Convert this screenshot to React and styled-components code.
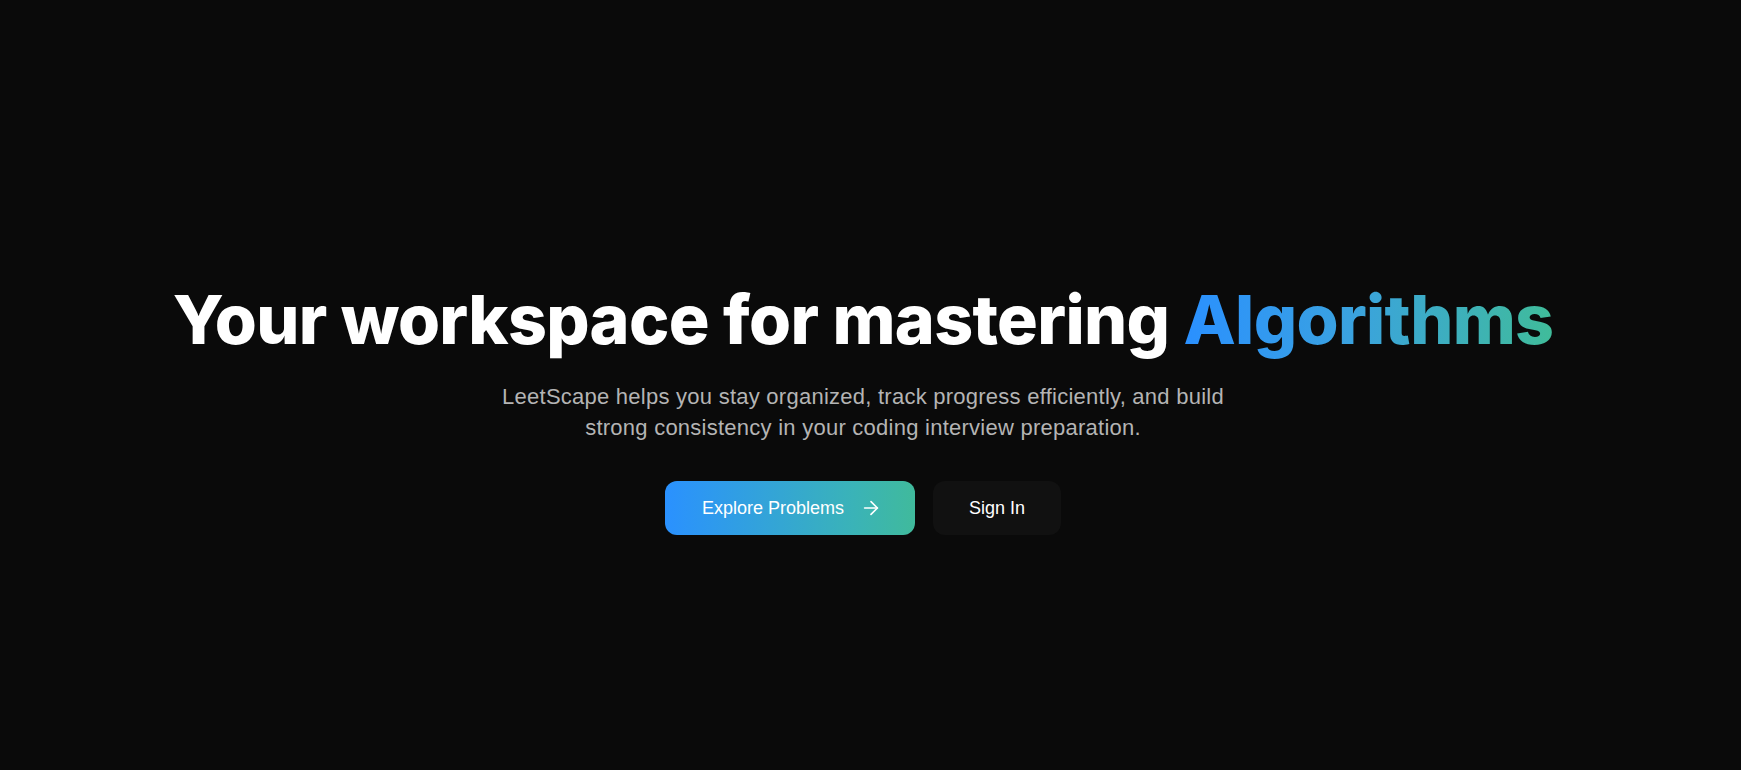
import styled, { createGlobalStyle } from 'styled-components';
import { ArrowRight } from 'lucide-react';

const GlobalStyle = createGlobalStyle`
  html, body {
    margin: 0;
    padding: 0;
    background: #0a0a0a;
  }
  body {
    font-family: 'Liberation Sans', Arial, sans-serif;
  }
`;

// the original page leaves room for a scrollbar on the right
const Page = styled.main`
  min-height: 770px;
  display: flex;
  flex-direction: column;
  align-items: center;
  padding: 280px 15px 0 0;
  box-sizing: border-box;
  background: #0a0a0a;
`;

const Title = styled.h1`
  margin: 0;
  font-family: Inter, 'Noto Sans', sans-serif;
  font-weight: 800;
  font-size: 68px;
  line-height: 1.15;
  letter-spacing: -0.01em;
  color: #ffffff;
  white-space: nowrap;
`;

const Accent = styled.span`
  background: linear-gradient(90deg, #2a90ff 0%, #3aa2e0 45%, #40bc9a 100%);
  -webkit-background-clip: text;
  background-clip: text;
  color: transparent;
`;

const Lead = styled.p`
  margin: 23px 0 0;
  max-width: 760px;
  text-align: center;
  font-size: 22px;
  line-height: 31px;
  letter-spacing: 0.25px;
  color: #b4b4b4;
`;

const Actions = styled.div`
  display: flex;
  gap: 18px;
  margin-top: 38px;
`;

const Button = styled.button`
  display: inline-flex;
  align-items: center;
  justify-content: center;
  gap: 16px;
  height: 54px;
  padding: ${(p) => (p.$primary ? '0 33px 0 37px' : '0 36px')};
  border: none;
  border-radius: 12px;
  font-family: 'Liberation Sans', Arial, sans-serif;
  font-size: 18px;
  color: #ffffff;
  cursor: pointer;
  background: ${(p) =>
    p.$primary ? 'linear-gradient(90deg, #2a91ff 0%, #3ab3b8 75%, #40ba9c 100%)' : '#111111'};
`;

export default function App() {
  return (
    <>
      <GlobalStyle />
      <Page>
        <Title>
          Your workspace for mastering <Accent>Algorithms</Accent>
        </Title>
        <Lead>
          LeetScape helps you stay organized, track progress efficiently, and build
          <br />
          strong consistency in your coding interview preparation.
        </Lead>
        <Actions>
          <Button $primary>
            Explore Problems
            <ArrowRight size={22} strokeWidth={1.75} />
          </Button>
          <Button>Sign In</Button>
        </Actions>
      </Page>
    </>
  );
}
